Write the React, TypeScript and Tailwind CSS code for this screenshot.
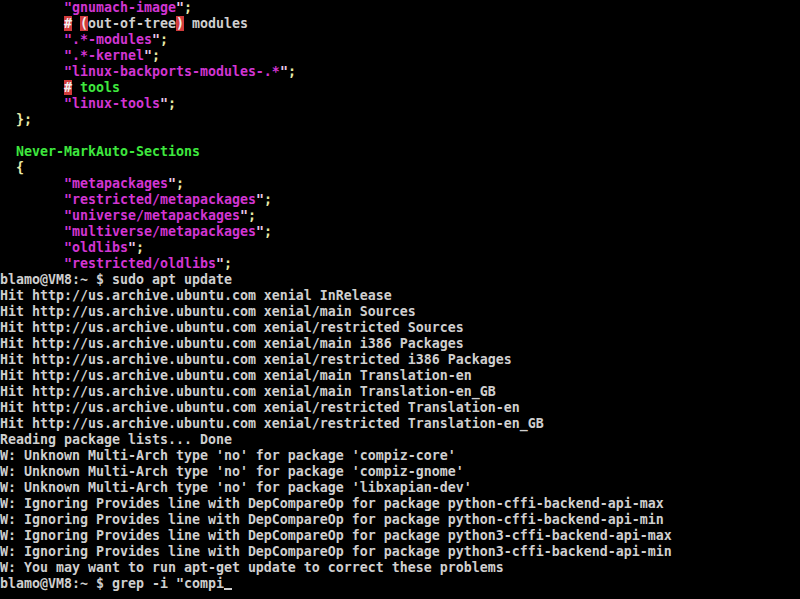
import React from "react";

// colours of the console palette
const MAG = "text-[#d235d2]";
const YEL = "text-[#eaeaa8]";
const GRN = "text-[#3ee83e]";
const TXT = "text-[#cfcfcf]";

type Seg = { t: string; c?: string };

const Str = (indent: string, s: string, semi = true): Seg[] => [
  { t: indent },
  { t: '"' + s, c: MAG },
  { t: '"', c: "text-[#e8c8e8]" },
  ...(semi ? [{ t: ";", c: YEL }] : []),
];

const pad = "        ";

const editorRows: Seg[][] = [
  Str(pad, "gnumach-image"),
  [
    { t: pad },
    { t: "#", c: "bg-[#d23c3c] text-[#f0f0f0]" },
    { t: " " },
    { t: "(", c: "bg-[#d23c3c] text-[#f0f0f0]" },
    { t: "out-of-tree", c: TXT },
    { t: ")", c: "bg-[#d23c3c] text-[#f0f0f0]" },
    { t: " modules", c: TXT },
  ],
  Str(pad, ".*-modules"),
  Str(pad, ".*-kernel"),
  Str(pad, "linux-backports-modules-.*"),
  [
    { t: pad },
    { t: "#", c: "bg-[#d23c3c] text-[#f0f0f0]" },
    { t: " tools", c: GRN },
  ],
  Str(pad, "linux-tools"),
  [{ t: "  " }, { t: "};", c: YEL }],
  [{ t: " " }],
  [{ t: "  " }, { t: "Never-MarkAuto-Sections", c: GRN }],
  [{ t: "  " }, { t: "{", c: YEL }],
  Str(pad, "metapackages"),
  Str(pad, "restricted/metapackages"),
  Str(pad, "universe/metapackages"),
  Str(pad, "multiverse/metapackages"),
  Str(pad, "oldlibs"),
  Str(pad, "restricted/oldlibs"),
];

const shellLines = [
  "blamo@VM8:~ $ sudo apt update",
  "Hit http://us.archive.ubuntu.com xenial InRelease",
  "Hit http://us.archive.ubuntu.com xenial/main Sources",
  "Hit http://us.archive.ubuntu.com xenial/restricted Sources",
  "Hit http://us.archive.ubuntu.com xenial/main i386 Packages",
  "Hit http://us.archive.ubuntu.com xenial/restricted i386 Packages",
  "Hit http://us.archive.ubuntu.com xenial/main Translation-en",
  "Hit http://us.archive.ubuntu.com xenial/main Translation-en_GB",
  "Hit http://us.archive.ubuntu.com xenial/restricted Translation-en",
  "Hit http://us.archive.ubuntu.com xenial/restricted Translation-en_GB",
  "Reading package lists... Done",
  "W: Unknown Multi-Arch type 'no' for package 'compiz-core'",
  "W: Unknown Multi-Arch type 'no' for package 'compiz-gnome'",
  "W: Unknown Multi-Arch type 'no' for package 'libxapian-dev'",
  "W: Ignoring Provides line with DepCompareOp for package python-cffi-backend-api-max",
  "W: Ignoring Provides line with DepCompareOp for package python-cffi-backend-api-min",
  "W: Ignoring Provides line with DepCompareOp for package python3-cffi-backend-api-max",
  "W: Ignoring Provides line with DepCompareOp for package python3-cffi-backend-api-min",
  "W: You may want to run apt-get update to correct these problems",
];

export default function App() {
  return (
    <div className="w-[800px] h-[599px] bg-black overflow-hidden font-['DejaVu_Sans_Mono','Liberation_Mono',monospace] font-bold text-[13.29px] leading-[16px] text-[#cfcfcf] whitespace-pre">
      {editorRows.map((row, i) => (
        <div key={"e" + i} className="h-4">
          {row.map((s, j) => (
            <span key={j} className={s.c}>
              {s.t}
            </span>
          ))}
        </div>
      ))}
      {shellLines.map((l, i) => (
        <div key={"s" + i} className="h-4">
          {l}
        </div>
      ))}
      <div className="h-4 flex">
        <span>blamo@VM8:~ $ grep -i "compi</span>
        <span className="w-2 h-4 flex items-end pb-[2px]">
          <span className="block w-2 h-[2px] bg-[#cfcfcf]" />
        </span>
      </div>
    </div>
  );
}
